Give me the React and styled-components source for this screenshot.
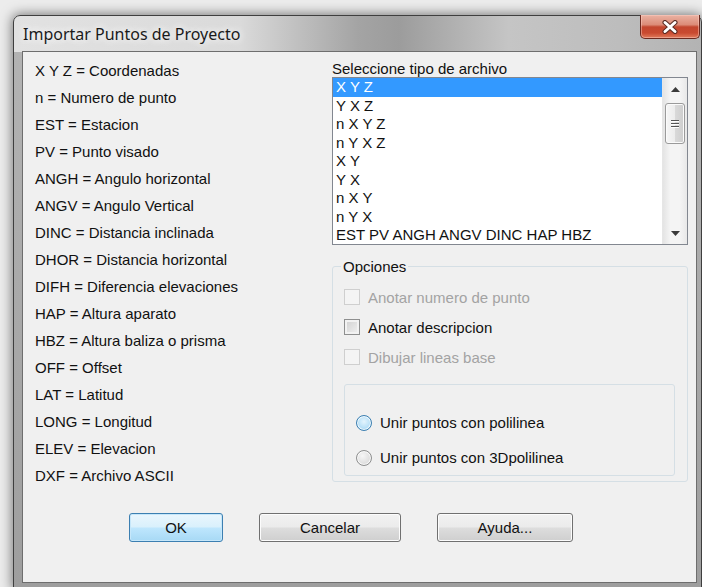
import React from "react";
import styled, {createGlobalStyle} from "styled-components";

const GlobalStyle = createGlobalStyle`
	html, body {
		margin: 0;
		padding: 0;
		width: 702px;
		height: 587px;
		overflow: hidden;
		background: #ececec;
	}
	body {
		font-family: "Liberation Sans", Arial, sans-serif;
		color: #111111;
	}
`;

const Window = styled.div`
	box-sizing: border-box;
	margin: 15px 0 0 13px;
	width: 689px;
	height: 574px;
	padding: 0 4px 5px 8px;
	border: 1px solid #3f3f3f;
	border-radius: 7px 7px 0 0;
	display: flex;
	flex-direction: column;
	background:
		linear-gradient(to right, #e2e2e2 0%, #dadada 33%, #a4a4a4 50%, #9c9c9c 56%, #c5c5c5 72%, #bdbdbd 88%, #b3b3b3 100%) top / 100% 36px no-repeat,
		linear-gradient(to bottom, #b4b4b4, #9e9e9e);
	box-shadow: 0 0 12px 1px rgba(0, 0, 0, 0.5);
`;

const TitleBar = styled.div`
	height: 35px;
	display: flex;
	align-items: flex-start;
	justify-content: space-between;
`;

const Title = styled.span`
	align-self: center;
	margin-left: 1px;
	font-family: "Noto Sans", "Liberation Sans", sans-serif;
	font-size: 16px;
	color: #1a1a1a;
	text-shadow: 0 0 6px #f4f4f4, 0 0 10px #ffffff;
`;

const CloseButton = styled.div`
	box-sizing: border-box;
	width: 60px;
	height: 24px;
	margin: -1px -3px 0 0;
	border: 1px solid #6b2a20;
	border-top: none;
	border-radius: 0 0 5px 5px;
	display: flex;
	align-items: center;
	justify-content: center;
	background: linear-gradient(to bottom, #eab2a3 0%, #dc8c78 42%, #c3472f 52%, #c94a30 78%, #e07b5c 100%);
	box-shadow: inset 0 0 0 1px rgba(255, 210, 200, 0.45);
`;

const Client = styled.div`
	flex: 1;
	border: 1px solid #6e6e6e;
	background: #f0f0f0;
	padding: 5px 0 0 12px;
	display: flex;
	flex-direction: column;
`;

const Columns = styled.div`
	display: grid;
	grid-template-columns: 297px 356px;
`;

const Legend = styled.ul`
	margin: 0;
	padding: 0;
	list-style: none;
`;

const LegendItem = styled.li`
	height: 27px;
	line-height: 27px;
	font-size: 15px;
	white-space: nowrap;
`;

const RightColumn = styled.div`
	padding-top: 3px;
	display: flex;
	flex-direction: column;
`;

const FieldLabel = styled.div`
	height: 17px;
	line-height: 17px;
	font-size: 15px;
`;

const ListBox = styled.div`
	box-sizing: border-box;
	height: 168px;
	border: 1px solid #828790;
	background: #ffffff;
	display: flex;
`;

const Items = styled.div`
	flex: 1;
	overflow: hidden;
`;

const Item = styled.div`
	height: 18.5px;
	line-height: 18.5px;
	padding-left: 3px;
	font-size: 15px;
	white-space: nowrap;
	background: ${p => (p.$selected ? "#3399ff" : "transparent")};
	color: ${p => (p.$selected ? "#ffffff" : "#111111")};
`;

const ScrollBar = styled.div`
	width: 24px;
	display: flex;
	flex-direction: column;
	align-items: center;
	border-left: 1px solid #e6e6e6;
	background: linear-gradient(to right, #e4e4e4, #f4f4f4 30%, #f4f4f4 70%, #e8e8e8);
`;

const ArrowBox = styled.div`
	height: 22px;
	width: 100%;
	display: flex;
	align-items: center;
	justify-content: center;
	margin-top: ${p => (p.$down ? "auto" : "0")};
`;

const Thumb = styled.div`
	box-sizing: border-box;
	margin-top: 3px;
	width: 20px;
	height: 41px;
	border: 1px solid #9a9a9a;
	border-radius: 3px;
	display: flex;
	flex-direction: column;
	align-items: center;
	justify-content: center;
	gap: 2px;
	background: linear-gradient(to right, #f6f6f6, #ececec 50%, #d9d9d9 51%, #cdcdcd);
	box-shadow: inset 0 0 0 1px #fbfbfb;
`;

const Grip = styled.span`
	width: 8px;
	height: 1px;
	background: #555;
	box-shadow: 0 1px 0 #fff;
`;

const GroupBox = styled.fieldset`
	margin: 13px 0 0;
	min-width: 0;
	padding: 7px 12px 5px 11px;
	border: 1px solid #d5dfe5;
	border-radius: 3px;
`;

const GroupTitle = styled.legend`
	margin-left: -3px;
	padding: 0 2px;
	font-size: 15px;
	line-height: 17px;
`;

const OptionRow = styled.label`
	height: ${p => p.$height || 30}px;
	display: flex;
	align-items: center;
	gap: 8px;
	font-size: 15px;
	white-space: nowrap;
	color: ${p => (p.$disabled ? "#a3a3a3" : "#111111")};
`;

const CheckBox = styled.span`
	box-sizing: border-box;
	width: 16px;
	height: 16px;
	border: 1px solid ${p => (p.$disabled ? "#cfcfcf" : "#8e8f8f")};
	background: ${p => (p.$disabled
		? "#f4f4f4"
		: "linear-gradient(135deg, #cfcfcf, #f2f2f2)")};
	box-shadow: inset 0 0 0 2px ${p => (p.$disabled ? "#f4f4f4" : "#f2f2f2")};
`;

const InnerBox = styled.div`
	margin-top: 12px;
	padding: 20px 0 0 11px;
	height: 70px;
	border: 1px solid #d5dfe5;
	border-radius: 3px;
	display: flex;
	flex-direction: column;
`;

const Radio = styled.span`
	box-sizing: border-box;
	width: 16px;
	height: 16px;
	border-radius: 50%;
	border: 1px solid ${p => (p.$hot ? "#3c7fb1" : "#8e8f8f")};
	background: ${p => (p.$hot
		? "radial-gradient(circle at 50% 40%, #e4f4fd 0%, #b6dff7 60%, #9ccfee 100%)"
		: "radial-gradient(circle at 40% 35%, #f6f6f6 0%, #dcdcdc 70%, #cacaca 100%)")};
	box-shadow: inset 0 0 0 1px rgba(255, 255, 255, 0.8);
`;

const ButtonRow = styled.div`
	margin-top: 24px;
	padding-left: 94px;
	display: flex;
	gap: 36px;
`;

const Button = styled.div`
	box-sizing: border-box;
	width: ${p => p.$width}px;
	height: 29px;
	border: 1px solid ${p => (p.$default ? "#3c7fb1" : "#707070")};
	border-radius: 3px;
	display: flex;
	align-items: center;
	justify-content: center;
	font-size: 15px;
	color: #111111;
	background: ${p => (p.$default
		? "linear-gradient(to bottom, #eaf6fd 0%, #d9f0fc 48%, #bee6fd 52%, #a7d9f5 100%)"
		: "linear-gradient(to bottom, #f2f2f2 0%, #ebebeb 48%, #dddddd 52%, #cfcfcf 100%)")};
	box-shadow: inset 0 0 0 1px ${p => (p.$default ? "#c6e7fa" : "#fcfcfc")};
`;

const legend = [
	"X Y Z = Coordenadas",
	"n = Numero de punto",
	"EST = Estacion",
	"PV = Punto visado",
	"ANGH = Angulo horizontal",
	"ANGV = Angulo Vertical",
	"DINC = Distancia inclinada",
	"DHOR = Distancia horizontal",
	"DIFH = Diferencia elevaciones",
	"HAP = Altura aparato",
	"HBZ = Altura baliza o prisma",
	"OFF = Offset",
	"LAT = Latitud",
	"LONG = Longitud",
	"ELEV = Elevacion",
	"DXF = Archivo ASCII"
];

const fileTypes = [
	"X Y Z",
	"Y X Z",
	"n X Y Z",
	"n Y X Z",
	"X Y",
	"Y X",
	"n X Y",
	"n Y X",
	"EST PV ANGH ANGV DINC HAP HBZ"
];

function Arrow({down}) {
	return <svg width="9" height="5" viewBox="0 0 9 5">
		<polygon points={down ? "0,0 9,0 4.5,5" : "0,5 9,5 4.5,0"} fill="#3a3a3a"/>
	</svg>;
}

function CloseGlyph() {
	return <svg width="18" height="14" viewBox="0 0 18 14">
		<path d="M4 2.5 L14 11.5 M14 2.5 L4 11.5" stroke="#5a2a22" strokeWidth="5" strokeLinecap="round"/>
		<path d="M4 2.5 L14 11.5 M14 2.5 L4 11.5" stroke="#ffffff" strokeWidth="3" strokeLinecap="round"/>
	</svg>;
}

export default function App() {
	return <>
		<GlobalStyle/>
		<Window>
			<TitleBar>
				<Title>Importar Puntos de Proyecto</Title>
				<CloseButton>
					<CloseGlyph/>
				</CloseButton>
			</TitleBar>
			<Client>
				<Columns>
					<Legend>
						{legend.map(line => <LegendItem key={line}>{line}</LegendItem>)}
					</Legend>
					<RightColumn>
						<FieldLabel>Seleccione tipo de archivo</FieldLabel>
						<ListBox>
							<Items>
								{fileTypes.map((type, index) => (
									<Item key={type} $selected={index === 0}>{type}</Item>
								))}
							</Items>
							<ScrollBar>
								<ArrowBox><Arrow/></ArrowBox>
								<Thumb>
									<Grip/>
									<Grip/>
									<Grip/>
								</Thumb>
								<ArrowBox $down><Arrow down/></ArrowBox>
							</ScrollBar>
						</ListBox>
						<GroupBox>
							<GroupTitle>Opciones</GroupTitle>
							<OptionRow $disabled>
								<CheckBox $disabled/>
								Anotar numero de punto
							</OptionRow>
							<OptionRow>
								<CheckBox/>
								Anotar descripcion
							</OptionRow>
							<OptionRow $disabled>
								<CheckBox $disabled/>
								Dibujar lineas base
							</OptionRow>
							<InnerBox>
								<OptionRow $height={35}>
									<Radio $hot/>
									Unir puntos con polilinea
								</OptionRow>
								<OptionRow $height={35}>
									<Radio/>
									Unir puntos con 3Dpolilinea
								</OptionRow>
							</InnerBox>
						</GroupBox>
					</RightColumn>
				</Columns>
				<ButtonRow>
					<Button $width={94} $default>OK</Button>
					<Button $width={142}>Cancelar</Button>
					<Button $width={136}>Ayuda...</Button>
				</ButtonRow>
			</Client>
		</Window>
	</>;
}
